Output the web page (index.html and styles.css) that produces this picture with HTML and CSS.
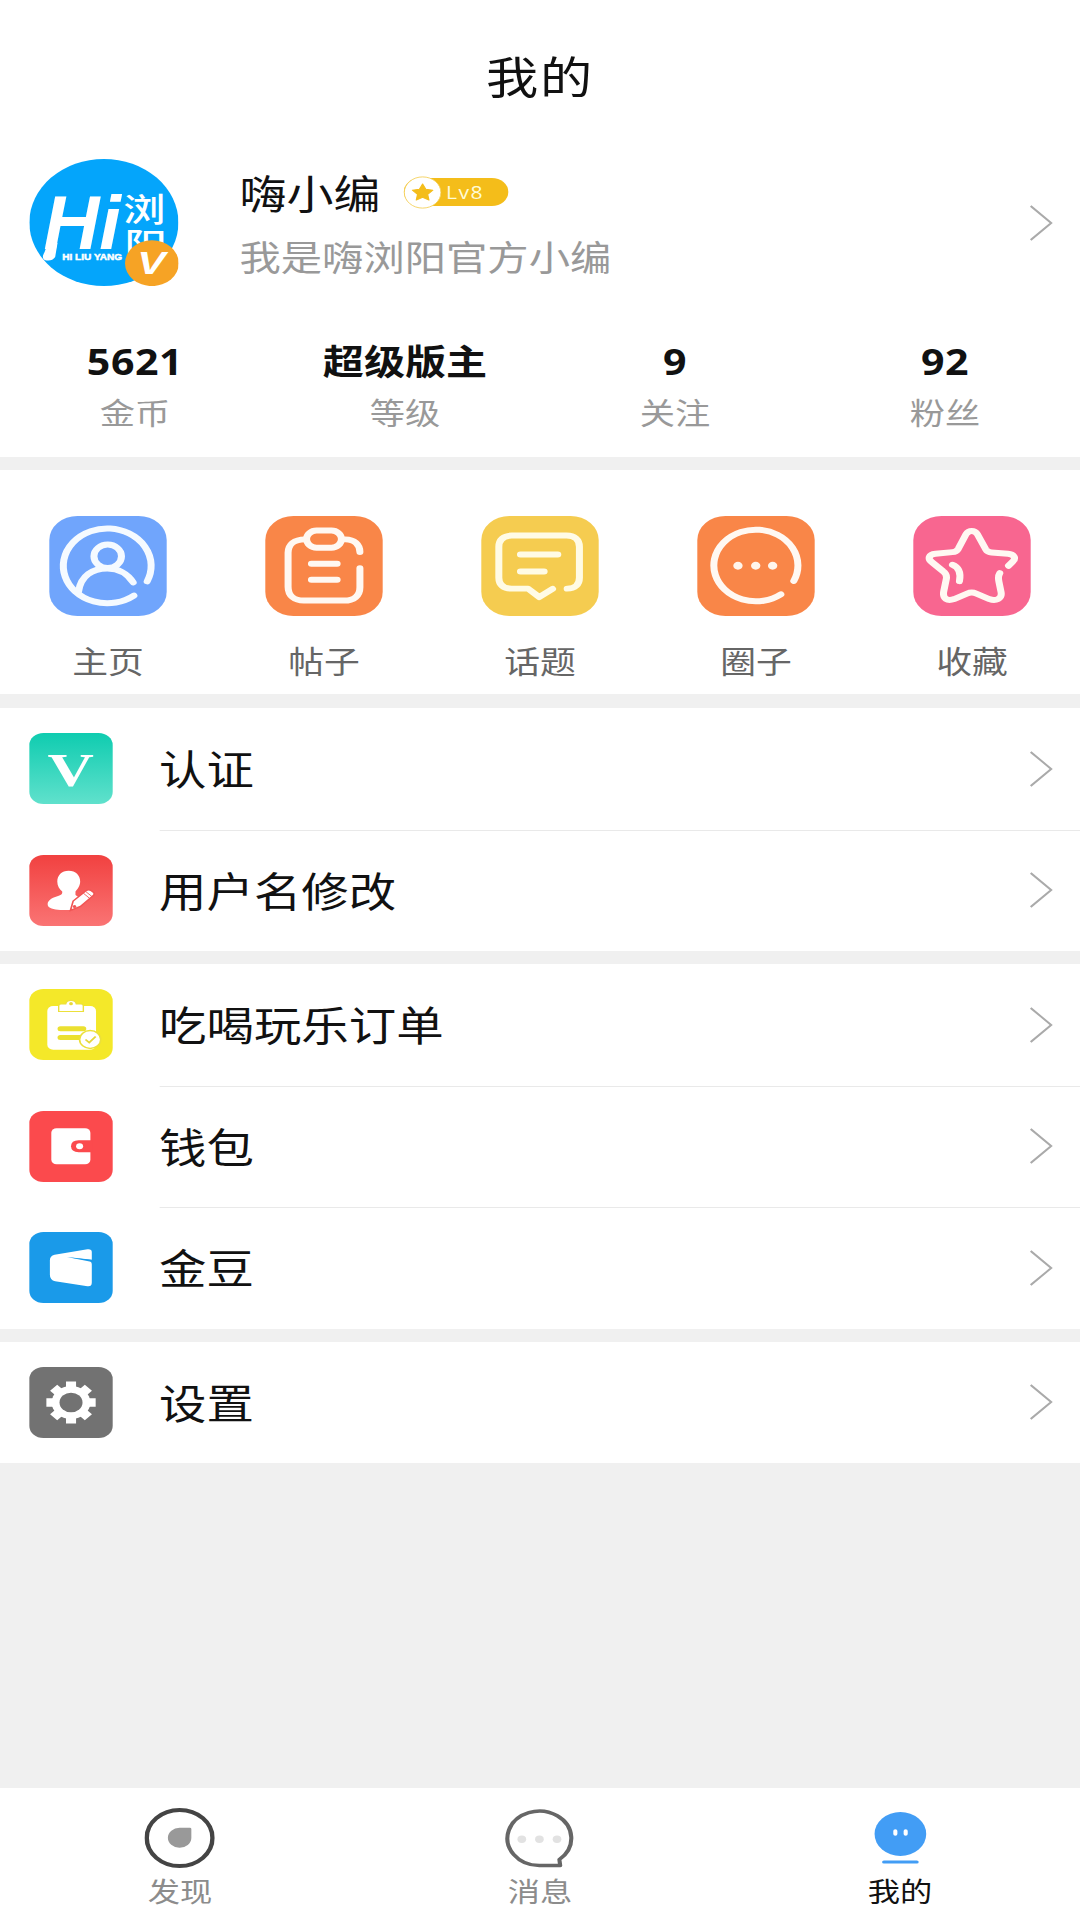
FILE: index.html
```html
<!DOCTYPE html>
<html lang="zh-CN">
<head>
<meta charset="UTF-8">
<meta name="viewport" content="width=device-width">
<title>我的</title>
<link rel="stylesheet" href="styles.css">
</head>
<body>
<div class="screen">
  <header class="title-bar"><h1>我的</h1></header>

  <section class="profile">
    <div class="avatar">
      <svg viewBox="0 0 127 127">
        <circle cx="63.5" cy="63.5" r="63.5" fill="#04a5fb"/>
        <g fill="#fff">
          <text class="brush" x="12" y="90" font-size="76" textLength="66" lengthAdjust="spacingAndGlyphs">Hi</text>
          <path d="M17 80L24 84L22 98Q19 103 13 101Q10 99 13 93Z"/>
          <text class="script" x="80" y="62" font-size="32" textLength="36" lengthAdjust="spacingAndGlyphs">浏</text>
          <text class="script" x="81" y="97" font-size="32" textLength="36" lengthAdjust="spacingAndGlyphs">阳</text>
          <text class="tiny" x="28" y="101" font-size="9.5" textLength="51" lengthAdjust="spacingAndGlyphs">HI LIU YANG</text>
        </g>
        <circle cx="104.4" cy="104.2" r="22.9" fill="#f6a325"/>
        <text class="vip" x="92" y="115" font-size="31" textLength="24" lengthAdjust="spacingAndGlyphs">V</text>
      </svg>
    </div>
    <div class="who">
      <div class="name-row">
        <span class="name">嗨小编</span>
        <span class="level">
          <svg class="level-star" viewBox="0 0 32 33"><circle cx="16" cy="16.500" r="15.6" fill="#fff" stroke="#f3cf55" stroke-width=".8"/><path d="M16 8l2.700 5.300 6 .9-4.400 4.100 1.100 5.800-5.400-2.800-5.400 2.800 1.100-5.800-4.400-4.100 6-.9z" fill="#f4bd1a" stroke="#f4bd1a" stroke-linejoin="round"/></svg>
          <span class="level-text">Lv8</span>
        </span>
      </div>
      <div class="bio">我是嗨浏阳官方小编</div>
    </div>
    <svg class="chevron" viewBox="0 0 20 36"><path d="M1 1l17.500 17L1 35"/></svg>
  </section>

  <section class="stats">
    <div class="stat"><b>5621</b><span>金币</span></div>
    <div class="stat"><b class="rank">超级版主</b><span>等级</span></div>
    <div class="stat"><b>9</b><span>关注</span></div>
    <div class="stat"><b>92</b><span>粉丝</span></div>
  </section>

  <nav class="actions">
    <a class="action">
      <svg class="tile blue" viewBox="0 0 100 100"><path d="M83.800 65.700A37.600 37.600 0 1 0 72.400 80"/><circle cx="50" cy="40.500" r="11.800"/><path d="M25 76C27 60 37 52.800 49.700 52.800C59 52.800 67 58 71.800 66.700"/></svg>
      <span>主页</span>
    </a>
    <a class="action">
      <svg class="tile orange" viewBox="0 0 100 100"><rect x="35.300" y="14.600" width="29.900" height="17.200" rx="8.600"/><path d="M68.500 23.500C76.500 23.500 81 29 81 36.200M34 23.500C24.500 23.500 19.500 29 19.500 37V71C19.500 80 25 85 33 85H67.500C76 85 81 80 81 71.500V52.500"/><path d="M39.500 48H61.500M39.500 64H61.500"/></svg>
      <span>帖子</span>
    </a>
    <a class="action">
      <svg class="tile yellow" viewBox="0 0 100 100"><path d="M73.500 73C80.500 73 84 68.500 84 62V31C84 24 80 19.700 73 19.700H26C19 19.700 15 24 15 31V62C15 69 19 73 26 73H40L49.500 81.500L61 73.300"/><path d="M33.500 38.700H65.500M33.500 55.700H53.800"/></svg>
      <span>话题</span>
    </a>
    <a class="action">
      <svg class="tile orange" viewBox="0 0 100 100"><path d="M82.600 65.300A36 36 0 1 0 71.500 78.700"/><g fill="#fff5ec" stroke="none"><circle cx="34.800" cy="50" r="4"/><circle cx="50" cy="50" r="4"/><circle cx="64.500" cy="50" r="4"/></g></svg>
      <span>圈子</span>
    </a>
    <a class="action">
      <svg class="tile pink" viewBox="0 0 100 100"><path d="M81.500 50L85 46C88.500 42 86 38.500 81 38L67 36.700Q63.500 36.400 62 33.500L55 18.500C52.500 13.800 47.500 13.800 45 18.500L38.500 33Q37 36 33.500 36.300L19 38C13 38.700 12 43 16 46.500L25.500 55.500Q29 58.500 28.300 63L26 76C25 83 29 86 35 83.500L46 78Q50 76 54 78L65 83.500C71 86 76 83 75.200 77L73.300 66Q72.300 60.500 74 57.500"/><path d="M33.500 49C39 51.500 41 56.500 39.500 65.500"/></svg>
      <span>收藏</span>
    </a>
  </nav>

  <section class="menu">
    <a class="item">
      <svg class="icon verify" viewBox="0 0 71 71"><text class="serif-v" x="15.500" y="53.500" font-size="46" textLength="39.500" lengthAdjust="spacingAndGlyphs">V</text></svg>
      <span class="label">认证</span>
      <svg class="chevron" viewBox="0 0 20 36"><path d="M1 1l17.500 17L1 35"/></svg>
    </a>
    <a class="item">
      <svg class="icon rename" viewBox="0 0 71 71"><path d="M33.500 15.800C39.500 15.800 43.300 20.500 43.300 26.500C43.300 31 41 34 39.300 36.500V40C41.500 42.500 45 42 46 45L37 54.800C29 55.500 20 55 16.500 52C14 48 17 44 22 42C25.500 40.500 28.500 40 28 36.500C25.500 34 23.800 31 23.800 26.500C23.800 20.500 27.500 15.800 33.500 15.800Z" fill="#fff"/><path d="M35 55.500L37.300 46L48.500 35.500Q50.500 34 52.500 35.500L54.800 37.500Q56 39 54.500 40.500L43.500 51.500Z" fill="#fff" stroke="#f15554" stroke-width="1.400"/><path d="M46 38.200L51.500 43.500M48 36.500L53.300 41.500" stroke="#f15554" stroke-width=".8"/><circle cx="38.500" cy="51.500" r="1.500" fill="#f15554"/></svg>
      <span class="label">用户名修改</span>
      <svg class="chevron" viewBox="0 0 20 36"><path d="M1 1l17.500 17L1 35"/></svg>
    </a>
  </section>

  <section class="menu">
    <a class="item">
      <svg class="icon order" viewBox="0 0 71 71"><rect x="15.300" y="17" width="41.500" height="43.800" rx="5" fill="#fff"/><path d="M25 22.500V17Q25 15 27 15H31Q31.500 11.300 35.500 11.300Q39.500 11.300 40 15H44Q46 15 46 17V22.500Z" fill="#fff" stroke="#ece03a" stroke-width="1.200"/><circle cx="35.500" cy="14.700" r="1.600" fill="#e8d93a"/><path d="M26.500 39.800H46M26.500 48.500H43" stroke="#ebe030" stroke-width="5" stroke-linecap="round"/><circle cx="51.800" cy="50.500" r="9" fill="#fff" stroke="#ece03a" stroke-width="1.400"/><path d="M47.800 50.500L51 53.500L56.500 47.500" fill="none" stroke="#e5d63a" stroke-width="1.700"/></svg>
      <span class="label">吃喝玩乐订单</span>
      <svg class="chevron" viewBox="0 0 20 36"><path d="M1 1l17.500 17L1 35"/></svg>
    </a>
    <a class="item">
      <svg class="icon wallet" viewBox="0 0 71 71"><rect x="18.700" y="17.300" width="33.300" height="36" rx="4.500" fill="#fff"/><path d="M54 29.300H42Q35.500 29.500 35.500 35.300Q35.500 41 42 41.200H54Z" fill="#fb4a4d"/><circle cx="42.800" cy="35.300" r="3" fill="#fff"/></svg>
      <span class="label">钱包</span>
      <svg class="chevron" viewBox="0 0 20 36"><path d="M1 1l17.500 17L1 35"/></svg>
    </a>
    <a class="item">
      <svg class="icon bean" viewBox="0 0 71 71"><path d="M33 25.300L50 28.300Q53.200 29 53.200 32.500V50.500Q53.200 54.800 49.500 54.300L22 49.300Q17.500 48 17.500 43V28Q17.500 24 21.500 22.700L49.500 17.200Q53.200 16.700 53.200 20V28L33 25.300Z" fill="#fff"/><path d="M32 24.900L53.500 27.700V30Z" fill="#1a9ae9"/></svg>
      <span class="label">金豆</span>
      <svg class="chevron" viewBox="0 0 20 36"><path d="M1 1l17.500 17L1 35"/></svg>
    </a>
  </section>

  <section class="menu">
    <a class="item">
      <svg class="icon settings" viewBox="0 0 71 71"><g stroke="#fff" stroke-width="8.600"><path d="M35.500 14.500V56.500M14.500 35.500H56.500M20.700 20.700L50.300 50.300M50.300 20.700L20.700 50.300"/></g><circle cx="35.500" cy="35.500" r="16.500" fill="#fff"/><circle cx="35.500" cy="35.500" r="9.800" fill="#727272"/></svg>
      <span class="label">设置</span>
      <svg class="chevron" viewBox="0 0 20 36"><path d="M1 1l17.500 17L1 35"/></svg>
    </a>
  </section>

  <nav class="tab-bar">
    <a class="tab">
      <svg viewBox="0 0 60 60"><circle cx="30" cy="30" r="28" fill="none" stroke="#444" stroke-width="3.800"/><path d="M30 19.800H38.800Q40 19.800 40 21V30A10 10 0 1 1 30 19.800Z" fill="#999"/></svg>
      <span>发现</span>
    </a>
    <a class="tab">
      <svg viewBox="0 0 60 60"><path d="M29.500 57.500A27.200 27.200 0 1 1 46.500 51.500L47.200 57.500Z" fill="none" stroke="#666" stroke-width="3.500" stroke-linejoin="round"/><g fill="#e2e2e2"><circle cx="14.500" cy="31.300" r="3.700"/><circle cx="29.500" cy="31.300" r="3.700"/><circle cx="44.500" cy="31.300" r="3.700"/></g></svg>
      <span>消息</span>
    </a>
    <a class="tab active">
      <svg viewBox="0 0 60 60"><circle cx="30" cy="26" r="22" fill="#429df5"/><path d="M25.700 23V26M34.500 23V26" stroke="#fff" stroke-width="3.500" stroke-linecap="round"/><path d="M16 54H44" stroke="#429df5" stroke-width="3.200" stroke-linecap="round"/></svg>
      <span>我的</span>
    </a>
  </nav>
</div>
</body>
</html>
```
FILE: styles.css
```css
* { box-sizing: border-box; }

body {
  margin: 0;
  overflow: hidden;
  background: #f0f0f0;
  color: #111;
  font-family: "Noto Sans CJK SC", sans-serif;
}

/* The layout is 920 units wide and is stretched to the 1080px window. */
.screen {
  display: flex;
  flex-direction: column;
  width: 920px;
  height: 1920px;
  transform: scaleX(1.173913);
  transform-origin: 0 0;
  background: #f0f0f0;
}

svg { display: block; flex: none; }

.title-bar {
  height: 142px;
  padding-top: 42px;
  background: #fff;
  text-align: center;
}

h1 {
  margin: 0;
  font-size: 44.500px;
  font-weight: 400;
  line-height: 65px;
  letter-spacing: 1.500px;
}

.profile {
  display: flex;
  align-items: center;
  height: 161px;
  padding: 0 23px 0 25px;
  background: #fff;
}

.avatar { width: 127px; }
.avatar svg { width: 127px; height: 127px; }
.brush { font-family: "Liberation Sans", sans-serif; font-weight: 700; font-style: italic; }
.script { font-family: "Noto Sans CJK SC", sans-serif; font-weight: 500; }
.tiny { font-family: "Liberation Sans", sans-serif; font-weight: 700; stroke: #fff; stroke-width: .5; }
.vip { font-family: "Liberation Sans", sans-serif; font-weight: 700; font-style: italic; fill: #fff; }

.who { flex: 1; margin: 3px 0 0 52px; }
.name-row { display: flex; align-items: center; height: 64px; }
.name { font-size: 40px; line-height: 64px; }

.level {
  display: flex;
  align-items: center;
  width: 89px;
  height: 28px;
  margin-left: 20px;
  border-radius: 14px;
  background: #f4bd1a;
}
.level-star { width: 32px; height: 33px; }
.level-text {
  margin-left: 4px;
  color: #fffbd6;
  font-family: "Open Sans", sans-serif;
  font-size: 18px;
  font-weight: 500;
  line-height: 29px;
  letter-spacing: 1.200px;
}

.bio { color: #999; font-size: 35.2px; line-height: 64px; }

.chevron {
  width: 20px;
  height: 36px;
  fill: none;
  stroke: #aaa;
  stroke-width: 1.8;
}

.stats {
  display: grid;
  grid-template-columns: repeat(4, 1fr);
  height: 154px;
  padding-top: 34px;
  background: #fff;
  text-align: center;
}
.stat b, .stat span { display: block; height: 50px; line-height: 50px; }
.stat b {
  font-family: "Open Sans", "Noto Sans CJK SC", sans-serif;
  font-size: 35px;
  font-weight: 700;
  letter-spacing: .5px;
}
.stat .rank { letter-spacing: 0; }
.stat span { color: #999; font-size: 30px; line-height: 49px; }

.actions {
  display: grid;
  grid-template-columns: repeat(5, 1fr);
  height: 224px;
  margin-top: 13px;
  padding-top: 46px;
  background: #fff;
}
.action { display: flex; flex-direction: column; align-items: center; }
.action span { margin-top: 19px; color: #666; font-size: 30.5px; line-height: 50px; }

.tile {
  width: 99.500px;
  height: 99.500px;
  border-radius: 24px;
  fill: none;
  stroke: #fff8f2;
  stroke-width: 6;
  stroke-linecap: round;
  stroke-linejoin: round;
}
.blue { background: #70a5fc; stroke: #f5faff; }
.orange { background: #f98648; }
.yellow { background: #f5cc50; stroke: #fffbe5; }
.pink { background: #f86690; }

.menu { margin-top: 13px; background: #fff; }
.actions + .menu { margin-top: 14px; }

.item {
  display: flex;
  align-items: center;
  height: 121.500px;
  padding-right: 23px;
  padding-left: 25px;
}
.icon { width: 71px; height: 71px; border-radius: 12px; }
.verify { background: linear-gradient(#0fccb0, #60e1cc); }
.rename { background: linear-gradient(#f14140, #fa7474); }
.order { background: #f4e829; }
.wallet { background: #fb4a4d; }
.bean { background: #1a9ae9; }
.settings { background: #727272; }
.serif-v { font-family: "Liberation Serif", serif; font-weight: 700; fill: #fff; }

.label {
  flex: 1;
  align-self: stretch;
  margin-left: 39.500px;
  font-size: 40.400px;
  line-height: 120px;
}
/* Dividers start under the label and run to the right edge. */
.item + .item {
  background: linear-gradient(#e9e9e9, #e9e9e9) 136px 0 / 100% 1px no-repeat;
}

.tab-bar {
  display: grid;
  grid-template-columns: repeat(3, 1fr);
  height: 132px;
  margin-top: auto;
  padding-top: 20px;
  background: #fff;
}
.tab { display: flex; flex-direction: column; align-items: center; color: #8c8c8c; }
.tab svg { width: 60px; height: 60px; }
.tab span { margin-top: 6px; font-size: 27.500px; line-height: 32px; }
.tab.active { color: #111; }
```
